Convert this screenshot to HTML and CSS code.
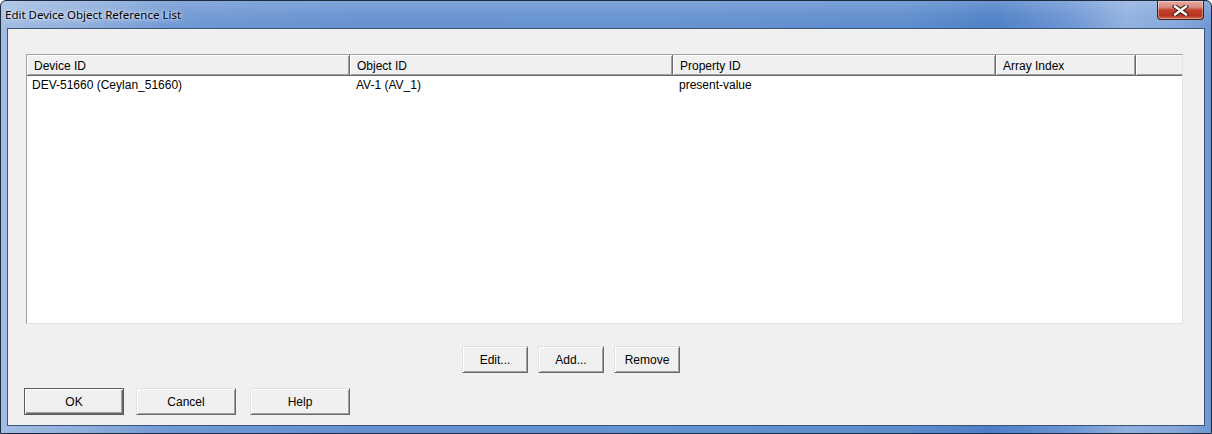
FILE: index.html
```html
<!DOCTYPE html>
<html>
<head>
<meta charset="utf-8">
<link rel="stylesheet" href="styles.css">
</head>
<body>
<div class="window">
  <div class="titlebar">
    <span class="title">Edit Device Object Reference List</span>
    <div class="close">
      <svg width="17" height="11" viewBox="0 0 17 11">
        <path d="M3 1.5 L14 9.5 M14 1.5 L3 9.5" stroke="#3a1c18" stroke-width="4.4" stroke-linecap="square" fill="none"/>
        <path d="M3 1.5 L14 9.5 M14 1.5 L3 9.5" stroke="#ffffff" stroke-width="2.4" stroke-linecap="square" fill="none"/>
      </svg>
    </div>
  </div>
  <div class="client">
    <div class="list">
      <div class="header">
        <div class="hcell">Device ID</div>
        <div class="hcell">Object ID</div>
        <div class="hcell">Property ID</div>
        <div class="hcell">Array Index</div>
        <div class="hcell filler"></div>
      </div>
      <div class="row">
        <div class="cell first">DEV-51660 (Ceylan_51660)</div>
        <div class="cell">AV-1 (AV_1)</div>
        <div class="cell">present-value</div>
        <div class="cell"></div>
        <div class="cell"></div>
      </div>
    </div>
    <div class="actions">
      <button class="btn small">Edit...</button>
      <button class="btn small">Add...</button>
      <button class="btn small">Remove</button>
    </div>
    <div class="footer">
      <button class="btn wide default">OK</button>
      <button class="btn wide">Cancel</button>
      <button class="btn wide help">Help</button>
    </div>
  </div>
</div>
</body>
</html>
```

FILE: styles.css
```css
html, body {
  margin: 0;
  padding: 0;
  background: #ffffff;
}

.window {
  width: 1212px;
  height: 434px;
  box-sizing: border-box;
  border: 1px solid #1d2a3f;
  border-radius: 6px 6px 0 0;
  padding: 0 6px 7px 6px;
  display: flex;
  flex-direction: column;
  background:
    linear-gradient(180deg, rgba(255,255,255,0.18) 0px, rgba(255,255,255,0.05) 14px, rgba(255,255,255,0) 28px),
    linear-gradient(90deg, #a3bde2 0%, #8aabda 8%, #6f98d3 14%, #6591d0 30%, #6592d0 55%, #5d8ccd 75%, #4e7fc6 82%, #6a94d3 88%, #90b0de 93%, #86a8db 97%, #6f97d2 100%);
  font-family: "Liberation Sans", Arial, sans-serif;
}

.titlebar {
  height: 27px;
  display: flex;
  align-items: flex-start;
  justify-content: space-between;
  position: relative;
}

.title {
  font-family: "Noto Sans", "Segoe UI", sans-serif;
  font-size: 11.5px;
  color: #000;
  margin-top: 6px;
  margin-left: -2px;
  text-shadow: 0 0 6px rgba(255,255,255,0.9), 0 0 3px rgba(255,255,255,0.8);
}

.close {
  width: 45px;
  height: 18px;
  margin-right: 1px;
  border: 1px solid #4a1f1a;
  border-top: none;
  border-radius: 0 0 4px 4px;
  background: linear-gradient(180deg, #e6aaa0 0%, #d88b7f 35%, #c2412c 50%, #b8341f 80%, #cf6a52 100%);
  box-shadow: inset 0 0 0 1px rgba(255,255,255,0.35);
  display: flex;
  align-items: center;
  justify-content: center;
}

.close svg {
  display: block;
  margin-top: 1px;
}

.client {
  flex: 1;
  background: #f0f0f0;
  border: 1px solid #3c5478;
  padding: 25px 21px 0 16px;
  display: flex;
  flex-direction: column;
}

.list {
  margin-left: 2px;
  height: 270px;
  box-sizing: border-box;
  background: #ffffff;
  border-top: 1px solid #a0a0a0;
  border-left: 1px solid #a0a0a0;
  border-right: 1px solid #e3e3e3;
  border-bottom: 1px solid #e3e3e3;
  font-size: 12px;
  color: #000;
}

.header, .row {
  display: grid;
  grid-template-columns: 323px 323px 323px 140px 1fr;
}

.header {
  height: 21px;
}

.hcell {
  box-sizing: border-box;
  height: 21px;
  background: #f0f0f0;
  border-right: 1px solid #696969;
  border-bottom: 1px solid #696969;
  box-shadow: inset 1px 1px #ffffff, inset -1px -1px #a0a0a0;
  padding: 4px 0 0 7px;
  line-height: 14px;
  white-space: nowrap;
}

.hcell.filler {
  border-right: none;
  box-shadow: inset 1px 1px #ffffff, inset 0 -1px #a0a0a0;
}

.row {
  height: 18px;
  line-height: 18px;
}

.cell {
  padding-left: 6px;
  white-space: nowrap;
}

.cell.first {
  padding-left: 5px;
}

.actions {
  display: flex;
  gap: 10px;
  margin-top: 22px;
  margin-left: 438px;
}

.footer {
  display: flex;
  gap: 12px;
  margin-top: 15px;
}

.btn {
  box-sizing: border-box;
  height: 27px;
  padding: 0;
  margin: 0;
  background: #f0f0f0;
  font-family: "Liberation Sans", Arial, sans-serif;
  font-size: 12px;
  color: #000;
  border-top: 1px solid #e3e3e3;
  border-left: 1px solid #e3e3e3;
  border-right: 1px solid #696969;
  border-bottom: 1px solid #696969;
  box-shadow: inset 1px 1px #ffffff, inset -1px -1px #a0a0a0;
}

.btn.small {
  width: 66px;
}

.btn.wide {
  width: 100px;
}

.btn.default {
  border: 1px solid #5a5a5a;
  box-shadow: inset 1px 1px #ffffff, inset -1px -1px #696969, inset -2px -2px #a0a0a0;
}

.btn.help {
  margin-left: 2px;
}
```
